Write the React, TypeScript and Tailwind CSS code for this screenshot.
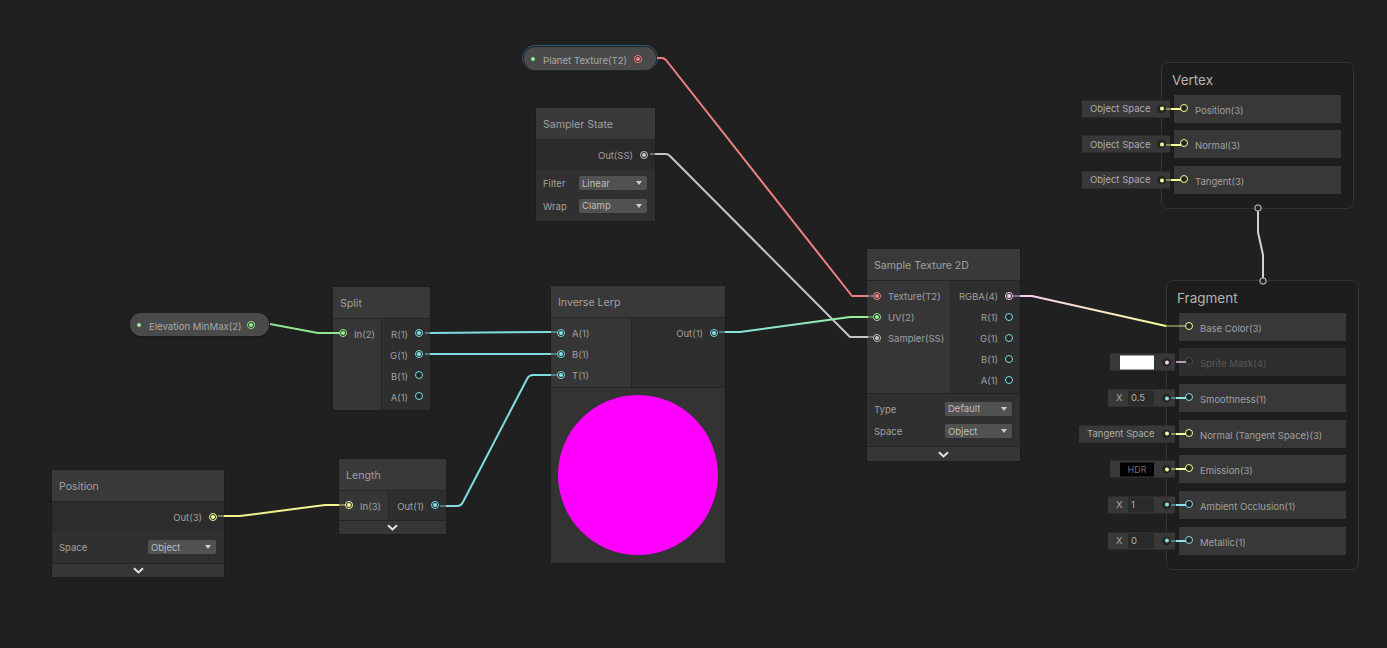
import type { ReactNode } from 'react'

const PORT = {
  v1: { ring: 'border-[#7fdcdf]', dot: 'bg-[#84e4e7]' },
  v2: { ring: 'border-[#9aef92]', dot: 'bg-[#9aef92]' },
  v3: { ring: 'border-[#f6ff9a]', dot: 'bg-[#f6ff9a]' },
  v4: { ring: 'border-[#fbcbf4]', dot: 'bg-[#fbcbf4]' },
  tex: { ring: 'border-[#ff8b8b]', dot: 'bg-[#ff8b8b]' },
  ss: { ring: 'border-[#c8c8c8]', dot: 'bg-[#c8c8c8]' },
  off: { ring: 'border-[#4a4a4a]', dot: 'bg-[#4a4a4a]' },
}
type Kind = keyof typeof PORT

function Port({ kind, on }: { kind: Kind; on?: boolean }) {
  return (
    <span className={`flex h-[8px] w-[8px] shrink-0 items-center justify-center rounded-full border bg-[#252525] ${PORT[kind].ring}`}>
      {on && <span className={`h-[4px] w-[4px] rounded-full ${PORT[kind].dot}`} />}
    </span>
  )
}

function InPort({ label, kind, on }: { label: string; kind: Kind; on?: boolean }) {
  return (
    <div className="flex h-[21px] items-center gap-[7px] pl-[6px] text-[9.5px] text-[#a0a0a0]">
      <Port kind={kind} on={on} />
      <span className="pt-[4px]">{label}</span>
    </div>
  )
}

function OutPort({ label, kind, on }: { label: string; kind: Kind; on?: boolean }) {
  return (
    <div className="flex h-[21px] items-center justify-end gap-[7px] pr-[7px] text-[9.5px] text-[#a0a0a0]">
      <span className="pt-[4px]">{label}</span>
      <Port kind={kind} on={on} />
    </div>
  )
}

function Title({ text }: { text: string }) {
  return (
    <div className="flex h-[32px] items-center border-b border-[#252525] bg-[#393939] pl-[7px] pt-[2px] text-[10.6px] text-[#a0a0a0]">
      {text}
    </div>
  )
}

function Chevron({ height = 'h-[14px]' }: { height?: string }) {
  return (
    <div className={`flex items-center justify-center border-t border-[#252525] bg-[#363636] ${height}`}>
      <svg width="11" height="7" viewBox="0 0 11 7" fill="none">
        <path d="M1 1.2 L5.5 5.4 L10 1.2" stroke="#e4e4e4" strokeWidth="2" />
      </svg>
    </div>
  )
}

function Control({ label, value, width }: { label: string; value: string; width: string }) {
  return (
    <div className="flex h-[22.5px] items-center justify-between pl-[7px] pr-[8px] text-[9.5px] text-[#a0a0a0]">
      <span className="pt-[2px]">{label}</span>
      <div className={`flex h-[14px] items-center justify-between rounded-[2px] bg-[#515151] pl-[3px] pr-[5px] text-[#bcbcbc] ${width}`}>
        <span className="pt-[1px]">{value}</span>
        <span className="h-0 w-0 border-x-[3.5px] border-t-[4px] border-x-transparent border-t-[#d0d0d0]" />
      </div>
    </div>
  )
}

function Pill({ label, kind, className }: { label: string; kind: Kind; className: string }) {
  return (
    <div className={`absolute flex h-[23px] items-center rounded-[11px] bg-[#4a4a4a] pl-[7px] pr-[14px] text-[9.6px] text-[#a8a8a8] shadow-[0_1px_2px_#181818] ${className}`}>
      <span className="h-[4px] w-[4px] rounded-full bg-[#9aef92]" />
      <span className="ml-[8px] grow pt-[6px]">{label}</span>
      <Port kind={kind} on />
    </div>
  )
}

function Field({ children, place }: { children: ReactNode; place: string }) {
  return (
    <div className={`absolute top-1/2 flex h-[17px] -translate-y-1/2 items-center bg-[#383838] text-[9.5px] text-[#acacac] ${place}`}>
      {children}
    </div>
  )
}

function Dot({ color }: { color: string }) {
  return (
    <span className="absolute right-[4px] flex h-[9px] w-[9px] items-center justify-center rounded-full bg-[#252525]">
      <span className={`h-[4px] w-[4px] rounded-full ${color}`} />
    </span>
  )
}

function NumField({ value }: { value: string }) {
  return (
    <>
      <span className="ml-[8px] w-[12px] text-[#a8a8a8]">X</span>
      <span className="flex h-[15px] w-[26px] items-center rounded-[2px] bg-[#2a2a2a] pl-[3px] text-[#b0b0b0]">{value}</span>
      <Dot color="bg-[#84e4e7]" />
    </>
  )
}

function MasterRow({ label, kind, dim, children }: { label: string; kind: Kind; dim?: boolean; children?: ReactNode }) {
  return (
    <div className={`relative flex h-[28px] items-center ${dim ? 'bg-[#2e2e2e] text-[#585858]' : 'bg-[#383838] text-[#a0a0a0]'} pl-[6px] text-[9.5px]`}>
      {children}
      <span className="relative -top-[1px]">
        <Port kind={kind} />
      </span>
      <span className="ml-[7px] pt-[4px]">{label}</span>
    </div>
  )
}

function MasterBlock({ title, className, children }: { title: string; className: string; children: ReactNode }) {
  return (
    <div className={`absolute w-[193px] rounded-[7px] border border-[#333333] bg-[#1d1d1d] px-[12px] ${className}`}>
      <div className="-ml-[2px] flex h-[31.7px] items-center pt-[2px] text-[13.5px] text-[#b4b4b4]">{title}</div>
      <div className="flex flex-col gap-[7.67px]">{children}</div>
    </div>
  )
}

export default function App() {
  return (
    <div className="relative h-[648px] w-[1387px] overflow-hidden bg-[#202020] font-['Inter','Liberation_Sans',sans-serif]">
      {/* property pills */}
      <div className="absolute left-[522px] top-[45px] h-[26px] w-[136px] rounded-[13px] border border-[#2d5f80]" />
      <Pill label="Planet Texture(T2)" kind="tex" className="left-[524px] top-[47px] w-[132px]" />
      <Pill label="Elevation MinMax(2)" kind="v2" className="left-[130px] top-[313px] w-[139px]" />

      {/* sampler state */}
      <div className="absolute left-[536px] top-[108px] w-[119px] bg-[#2a2a2a] ring-1 ring-[#1c1c1c]">
        <Title text="Sampler State" />
        <div className="h-[29px] pt-[4px]">
          <OutPort label="Out(SS)" kind="ss" on />
        </div>
        <div className="bg-[#303030] pb-[4px] pt-[3px]">
          <Control label="Filter" value="Linear" width="w-[68px]" />
          <Control label="Wrap" value="Clamp" width="w-[68px]" />
        </div>
      </div>

      {/* split */}
      <div className="absolute left-[333px] top-[287px] w-[97px] bg-[#2e2e2e] ring-1 ring-[#1c1c1c]">
        <Title text="Split" />
        <div className="flex h-[91px]">
          <div className="w-[49px] border-r border-[#252525] bg-[#363636] pt-[3.5px]">
            <InPort label="In(2)" kind="v2" on />
          </div>
          <div className="grow pt-[3.5px]">
            <OutPort label="R(1)" kind="v1" on />
            <OutPort label="G(1)" kind="v1" on />
            <OutPort label="B(1)" kind="v1" />
            <OutPort label="A(1)" kind="v1" />
          </div>
        </div>
      </div>

      {/* inverse lerp */}
      <div className="absolute left-[551px] top-[286px] w-[174px] bg-[#2e2e2e] ring-1 ring-[#1c1c1c]">
        <Title text="Inverse Lerp" />
        <div className="flex h-[70px] border-b border-[#252525]">
          <div className="w-[81px] border-r border-[#252525] bg-[#363636] pt-[4px]">
            <InPort label="A(1)" kind="v1" on />
            <InPort label="B(1)" kind="v1" on />
            <InPort label="T(1)" kind="v1" on />
          </div>
          <div className="grow pt-[4px]">
            <OutPort label="Out(1)" kind="v1" on />
          </div>
        </div>
        <div className="flex h-[175px] items-center justify-center bg-[#333333] pb-[1px]">
          <div className="h-[160px] w-[160px] rounded-full bg-[#ff00ff]" />
        </div>
      </div>

      {/* position */}
      <div className="absolute left-[52px] top-[470px] w-[172px] bg-[#2c2c2c] ring-1 ring-[#1c1c1c]">
        <Title text="Position" />
        <div className="h-[29px] pt-[4px]">
          <OutPort label="Out(3)" kind="v3" on />
        </div>
        <div className="h-[32px] bg-[#303030] pt-[5px]">
          <Control label="Space" value="Object" width="w-[68px]" />
        </div>
        <Chevron />
      </div>

      {/* length */}
      <div className="absolute left-[339px] top-[459px] w-[107px] bg-[#2e2e2e] ring-1 ring-[#1c1c1c]">
        <Title text="Length" />
        <div className="flex h-[29px]">
          <div className="w-[50px] border-r border-[#252525] bg-[#363636] pt-[3.5px]">
            <InPort label="In(3)" kind="v3" on />
          </div>
          <div className="grow pt-[3.5px]">
            <OutPort label="Out(1)" kind="v1" on />
          </div>
        </div>
        <Chevron />
      </div>

      {/* sample texture */}
      <div className="absolute left-[867px] top-[249px] w-[153px] bg-[#2e2e2e] ring-1 ring-[#1c1c1c]">
        <Title text="Sample Texture 2D" />
        <div className="flex h-[113px] border-b border-[#252525]">
          <div className="w-[84px] border-r border-[#252525] bg-[#363636] pt-[4px]">
            <InPort label="Texture(T2)" kind="tex" on />
            <InPort label="UV(2)" kind="v2" on />
            <InPort label="Sampler(SS)" kind="ss" on />
          </div>
          <div className="grow pt-[4px]">
            <OutPort label="RGBA(4)" kind="v4" on />
            <OutPort label="R(1)" kind="v1" />
            <OutPort label="G(1)" kind="v1" />
            <OutPort label="B(1)" kind="v1" />
            <OutPort label="A(1)" kind="v1" />
          </div>
        </div>
        <div className="h-[52px] bg-[#303030] pt-[3.5px]">
          <Control label="Type" value="Default" width="w-[67px]" />
          <Control label="Space" value="Object" width="w-[67px]" />
        </div>
        <Chevron height="h-[15px]" />
      </div>

      {/* master stack */}
      <MasterBlock title="Vertex" className="left-[1161px] top-[62px] h-[147px]">
        <MasterRow label="Position(3)" kind="v3">
          <Field place="right-[171px] w-[88px]">
            <span className="ml-[8px]">Object Space</span>
            <Dot color="bg-[#f6ff9a]" />
          </Field>
        </MasterRow>
        <MasterRow label="Normal(3)" kind="v3">
          <Field place="right-[171px] w-[88px]">
            <span className="ml-[8px]">Object Space</span>
            <Dot color="bg-[#f6ff9a]" />
          </Field>
        </MasterRow>
        <MasterRow label="Tangent(3)" kind="v3">
          <Field place="right-[171px] w-[88px]">
            <span className="ml-[8px]">Object Space</span>
            <Dot color="bg-[#f6ff9a]" />
          </Field>
        </MasterRow>
      </MasterBlock>

      <MasterBlock title="Fragment" className="left-[1166px] top-[280px] h-[290px]">
        <MasterRow label="Base Color(3)" kind="v3" />
        <MasterRow label="Sprite Mask(4)" kind="off" dim>
          <Field place="right-[171px] w-[65px]">
            <span className="ml-[10px] h-[14px] w-[34px] bg-white" />
            <Dot color="bg-[#fbcbf4]" />
          </Field>
        </MasterRow>
        <MasterRow label="Smoothness(1)" kind="v1">
          <Field place="right-[171px] w-[67px]">
            <NumField value="0.5" />
          </Field>
        </MasterRow>
        <MasterRow label="Normal (Tangent Space)(3)" kind="v3">
          <Field place="right-[171px] w-[96px]">
            <span className="ml-[8px]">Tangent Space</span>
            <Dot color="bg-[#f6ff9a]" />
          </Field>
        </MasterRow>
        <MasterRow label="Emission(3)" kind="v3">
          <Field place="right-[171px] w-[65px]">
            <span className="ml-[10px] flex h-[14px] w-[34px] items-center justify-center bg-black text-[9px] text-[#6e6e6e]">HDR</span>
            <Dot color="bg-[#f6ff9a]" />
          </Field>
        </MasterRow>
        <MasterRow label="Ambient Occlusion(1)" kind="v1">
          <Field place="right-[171px] w-[67px]">
            <NumField value="1" />
          </Field>
        </MasterRow>
        <MasterRow label="Metallic(1)" kind="v1">
          <Field place="right-[171px] w-[67px]">
            <NumField value="0" />
          </Field>
        </MasterRow>
      </MasterBlock>

      {/* wires sit over the nodes */}
      <svg className="pointer-events-none absolute left-0 top-0" width="1387" height="648" fill="none">
        <defs>
          <linearGradient id="lerpOut" gradientUnits="userSpaceOnUse" x1="725" y1="0" x2="868" y2="0">
            <stop offset="0" stopColor="#84e4e7" />
            <stop offset="1" stopColor="#9aef92" />
          </linearGradient>
          <linearGradient id="rgba" gradientUnits="userSpaceOnUse" x1="1020" y1="0" x2="1166" y2="0">
            <stop offset="0" stopColor="#fbcbf4" />
            <stop offset="1" stopColor="#f6ff9a" />
          </linearGradient>
        </defs>
        <g strokeWidth="2" strokeLinejoin="round">
          <path d="M657 58 L662 58 Q664 58 666 60 L852 296 L868 296" stroke="#f08080" />
          <path d="M655 154 L666 154 Q668 154 670 156 L850 337 L868 337" stroke="#c4c4c4" />
          <path d="M270 324 L318 333 L340 333" stroke="#8fe88f" />
          <path d="M430 333 L551 332" stroke="#7fdcdf" />
          <path d="M430 354 L551 354" stroke="#7fdcdf" />
          <path d="M446 506 L457 506 Q461 506 463 502 L527 379 Q529 375 533 375 L551 375" stroke="#7fdcdf" />
          <path d="M725 332 L740 332 L850 317 L868 317" stroke="url(#lerpOut)" />
          <path d="M224 516 L240 516 L325 505 L339 505" stroke="#f0f58e" />
          <path d="M1020 296 L1032 296 L1166 326" stroke="url(#rgba)" />
          <path d="M1258 208 L1258 232 L1263 255 L1263 280" stroke="#d0d0d0" />
          {/* stubs into the ports */}
          <path d="M1171 109 H1181 M1171 145 H1181 M1171 180 H1181" stroke="#f6ff9a" />
          <path d="M1176 398 H1186 M1176 541 H1186 M1176 505 H1186" stroke="#84e4e7" />
          <path d="M1176 434 H1186 M1176 469 H1186" stroke="#f6ff9a" />
          <path d="M1176 362 H1186" stroke="#fbcbf4" opacity="0.7" />
        </g>
        <g strokeWidth="2" opacity="0.4">
          <path d="M1166 109 H1171 M1166 145 H1171 M1166 180 H1171" stroke="#f6ff9a" />
          <path d="M1166 326 H1185" stroke="#f6ff9a" />
          <path d="M1171 398 H1176 M1171 541 H1176 M1171 505 H1176" stroke="#84e4e7" />
          <path d="M1171 434 H1176 M1171 469 H1176" stroke="#f6ff9a" />
          <path d="M1013 296 H1020" stroke="#fbcbf4" />
          <path d="M868 296 H873 M551 332 H557 M551 354 H557 M551 375 H557" stroke="#84e4e7" />
          <path d="M868 317 H873 M340 333 H345" stroke="#9aef92" />
          <path d="M868 337 H873" stroke="#c8c8c8" />
          <path d="M339 505 H346" stroke="#f6ff9a" />
          <path d="M425 333 H430 M425 354 H430 M440 506 H446 M719 332 H725" stroke="#84e4e7" />
          <path d="M650 154 H655" stroke="#c8c8c8" />
          <path d="M218 516 H224" stroke="#f6ff9a" />
        </g>
        <circle cx="1258" cy="208" r="3.2" fill="#252525" stroke="#d4d4d4" />
        <circle cx="1263" cy="281" r="3.2" fill="#252525" stroke="#d4d4d4" />
      </svg>
    </div>
  )
}
